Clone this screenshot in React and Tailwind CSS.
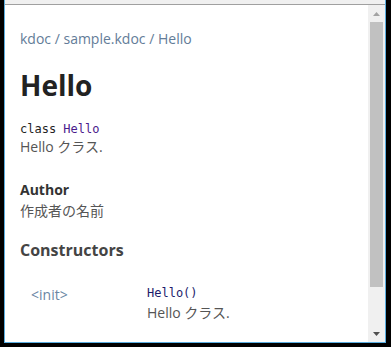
import React from 'react';

const sans = "font-['Open_Sans','Noto_Sans_CJK_JP',sans-serif]";
const mono = "font-['DejaVu_Sans_Mono',monospace]";

const App = () => {
  return (
    <div className="w-[391px] h-[347px] bg-black pl-[4px] pr-[5px] pb-[4px] flex">
      <div className="flex-1 flex flex-col border-x border-b border-[#5aaee0]">
        {/* window top strip */}
        <div className="h-[4px] bg-[#f0f0f0]" />
        <div className="h-[1px] bg-[#a0a0a0]" />

        <div className="flex-1 flex min-h-0">
          {/* page content */}
          <div className={`flex-1 bg-white overflow-hidden pl-[15px] pt-[24px] ${sans}`}>
            <div className="text-[14px] leading-[20px] text-[#637c98]">
              kdoc / sample.kdoc / Hello
            </div>

            <h1 className="mt-[18px] text-[28px] leading-[36px] font-bold text-[#222]">Hello</h1>

            <div className={`mt-[18px] text-[12px] leading-[16px] text-[#222] ${mono}`}>
              class <span className="text-[#4b1a8c]">Hello</span>
            </div>
            <p className="text-[14px] leading-[20px] text-[#555]">Hello クラス.</p>

            <div className="mt-[23px] text-[14px] leading-[20px] font-bold text-[#333]">Author</div>
            <p className="mt-[1px] text-[14px] leading-[20px] text-[#555]">作成者の名前</p>

            <h3 className="mt-[18px] text-[16px] leading-[22px] font-bold text-[#444]">Constructors</h3>

            <div className="mt-[24px] flex">
              <div className="w-[127px] pl-[11px] text-[14px] leading-[20px] text-[#6a86a3]">&lt;init&gt;</div>
              <div>
                <div className={`text-[12px] leading-[16px] text-[#1c1c6b] ${mono}`}>Hello()</div>
                <p className="mt-[2px] text-[14px] leading-[20px] text-[#555]">Hello クラス.</p>
              </div>
            </div>
          </div>

          {/* scrollbar */}
          <div className="w-[17px] bg-[#f0f0f0] flex flex-col">
            <div className="h-[17px] flex items-center justify-center">
              <svg width="7" height="4" viewBox="0 0 7 4">
                <path d="M3.5 0 L7 4 L0 4 Z" fill="#a3a3a3" />
              </svg>
            </div>
            <div className="h-[265px] mx-[2px] bg-[#c1c1c1]" />
            <div className="flex-1" />
            <div className="h-[17px] flex items-center justify-center">
              <svg width="7" height="4" viewBox="0 0 7 4">
                <path d="M0 0 L7 0 L3.5 4 Z" fill="#505050" />
              </svg>
            </div>
          </div>
        </div>
      </div>
    </div>
  );
};

export default App;
